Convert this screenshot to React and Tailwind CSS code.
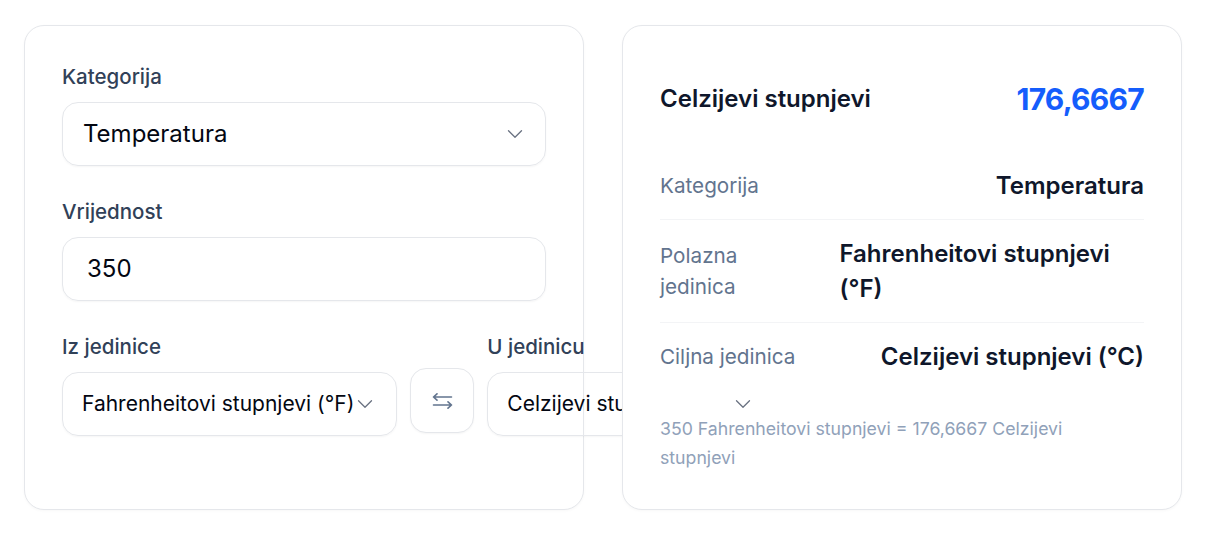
import { ChevronDown } from "lucide-react";

function Label({ children }) {
  return (
    <div className="mb-[11px] text-[20.5px] leading-7 font-medium text-slate-700 whitespace-nowrap">
      {children}
    </div>
  );
}

function SwapIcon() {
  return (
    <svg
      width="21"
      height="16"
      viewBox="0 0 21 16"
      fill="none"
      stroke="currentColor"
      strokeWidth="1.6"
      strokeLinecap="round"
      strokeLinejoin="round"
    >
      <path d="M19.5 4H1.5M5 0.8 1.5 4 5 7.2" />
      <path d="M1.5 12h18M16 8.8l3.5 3.2-3.5 3.2" />
    </svg>
  );
}

function SelectBox({ value, big }) {
  return (
    <div
      className={`relative flex h-16 items-center rounded-2xl border border-gray-200 shadow-[0_1px_2px_rgba(0,0,0,0.04)] whitespace-nowrap text-gray-950 ${
        big ? "w-full pl-5 text-[24px]" : "pl-[19px] pr-[42px] text-[21px]"
      }`}
    >
      {value}
      <ChevronDown
        className={`absolute top-1/2 z-20 -translate-y-1/2 text-gray-500 ${
          big ? "right-[17px]" : "right-[18px]"
        }`}
        size={26}
        strokeWidth={1.2}
      />
    </div>
  );
}

function Row({ label, value, last, wrapLabel }) {
  return (
    <div
      className={`flex items-center justify-between gap-7 py-4 ${
        last ? "" : "border-b border-gray-100"
      }`}
    >
      <span className="text-[20.7px] leading-[31px] text-slate-500">{label}</span>
      <span
        className={`text-[24px] leading-[35px] font-semibold text-slate-900 ${
          wrapLabel ? "" : "text-right"
        }`}
      >
        {value}
      </span>
    </div>
  );
}

export default function App() {
  return (
    <div className="min-h-screen bg-white px-6 pt-[25px] font-[Inter,'Liberation_Sans',sans-serif]">
      <div className="grid grid-cols-2 gap-[38px]">
        {/* Unos */}
        <section className="rounded-[20px] border border-gray-200 bg-white p-[37px] shadow-[0_1px_3px_rgba(0,0,0,0.03)]">
          <div className="space-y-8">
            <div>
              <Label>Kategorija</Label>
              <SelectBox value="Temperatura" big />
            </div>
            <div>
              <Label>Vrijednost</Label>
              <div className="flex h-16 items-center rounded-2xl border border-gray-200 pl-6 text-[24px] text-gray-950 shadow-[0_1px_2px_rgba(0,0,0,0.04)]">
                350
              </div>
            </div>
            <div className="flex items-end gap-[13px]">
              <div className="shrink-0">
                <Label>Iz jedinice</Label>
                <SelectBox value="Fahrenheitovi stupnjevi (°F)" />
              </div>
              <button className="mb-[3px] flex h-[65px] w-16 shrink-0 items-center justify-center rounded-2xl border border-gray-200 bg-white text-slate-500 shadow-[0_1px_2px_rgba(0,0,0,0.04)]">
                <SwapIcon />
              </button>
              <div className="shrink-0">
                <Label>U jedinicu</Label>
                <SelectBox value="Celzijevi stupnjevi (°C)" />
              </div>
            </div>
          </div>
        </section>

        {/* Rezultat */}
        <section className="relative z-10 rounded-[20px] border border-gray-200 bg-white p-[37px] shadow-[0_1px_3px_rgba(0,0,0,0.03)]">
          <div className="mb-[33px] mt-4 flex h-10 items-center justify-between">
            <span className="text-[24px] font-semibold text-slate-900">
              Celzijevi stupnjevi
            </span>
            <span className="text-[30px] font-bold tracking-tight text-blue-600">
              176,6667
            </span>
          </div>
          <Row label="Kategorija" value="Temperatura" />
          <Row
            label="Polazna jedinica"
            value="Fahrenheitovi stupnjevi (°F)"
            wrapLabel
          />
          <Row label="Ciljna jedinica" value="Celzijevi stupnjevi (°C)" last />
          <p className="mt-6 pr-10 text-[17.7px] leading-[29px] text-slate-400">
            350 Fahrenheitovi stupnjevi = 176,6667 Celzijevi stupnjevi
          </p>
        </section>
      </div>
    </div>
  );
}
